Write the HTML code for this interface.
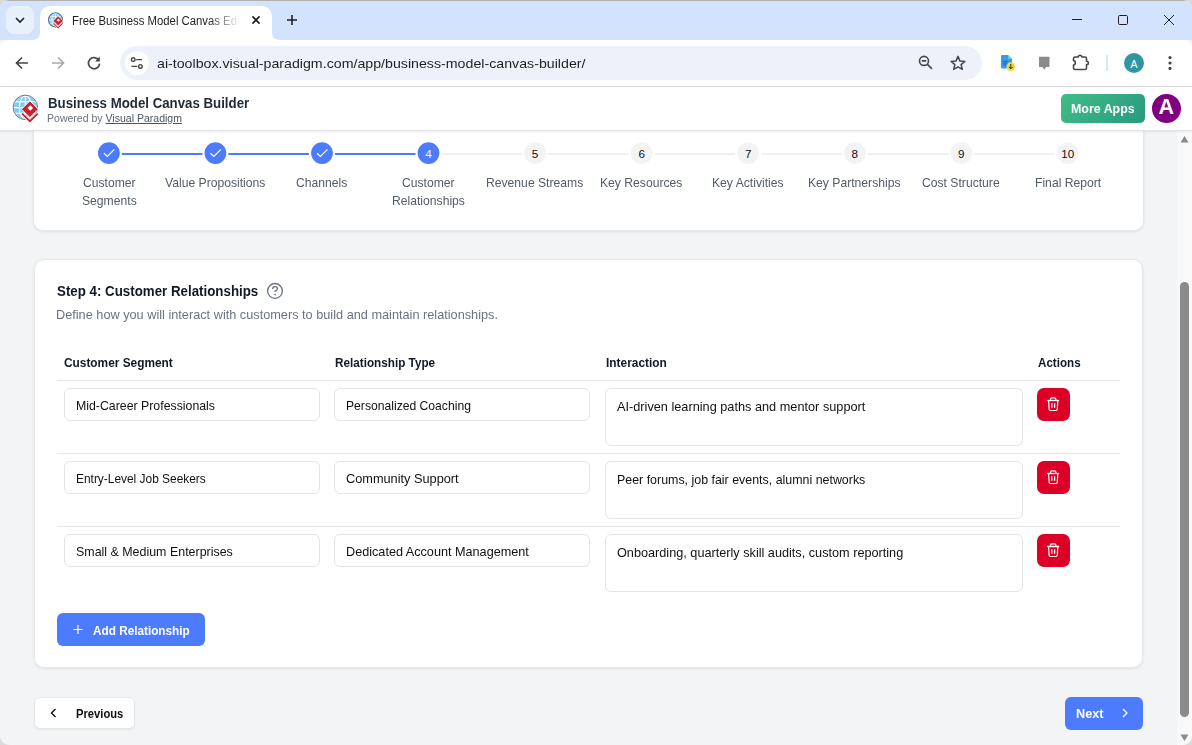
<!DOCTYPE html>
<html><head><meta charset="utf-8">
<style>
html,body{margin:0;padding:0;}
body{width:1192px;height:745px;overflow:hidden;position:relative;background:#dadada;font-family:"Liberation Sans",sans-serif;}
#win{position:absolute;left:0;top:0;width:1192px;height:745px;overflow:hidden;border-radius:9px;background:#f3f4f6;}
.t{position:absolute;white-space:nowrap;line-height:1;}
svg{position:absolute;overflow:visible;}
</style></head><body><div id="win">
<div style="position:absolute;left:0px;top:0px;width:1192px;height:40px;background:#d3e3fd;"></div>
<div style="position:absolute;left:0px;top:0px;width:1192px;height:1px;background:#b3b1ae;"></div>
<div style="position:absolute;left:6px;top:6px;width:28px;height:28px;background:#e9f0fd;border-radius:8px;"></div>
<svg style="left:0;top:0" width="1" height="1"><path d="M16 18 L20 22 L24 18" fill="none" stroke="#1f1f1f" stroke-width="1.6"/></svg>
<div style="position:absolute;left:40px;top:6px;width:232px;height:40px;background:#fff;border-radius:10px 10px 0 0;"></div>
<svg style="left:0;top:0" width="1" height="1"><path d="M32 40 Q40 40 40 32 L40 40 Z" fill="#fff"/><path d="M280 40 Q272 40 272 32 L272 40 Z" fill="#fff"/></svg>
<svg style="left:0;top:0" width="1" height="1"><g transform="translate(55.5 19.8) scale(0.58)">
<circle r="12.2" fill="#fff"/>
<circle r="11.4" fill="#86ccf2"/>
<path d="M-12 -5.8 H12 M-12 0.2 H12 M-12 6 H12 M0 -12 V12" stroke="#fff" stroke-width="1.2"/>
<ellipse rx="6" ry="11.5" fill="none" stroke="#fff" stroke-width="1.2"/>
<circle r="12.2" fill="none" stroke="#58778a" stroke-width="1.8965517241379313"/>
<path d="M-3.3 6.2 L4.5 13.8 L12.3 6.2" fill="none" stroke="#fff" stroke-width="3.4"/>
<path d="M-3.3 6.2 L4.5 13.8 L12.3 6.2" fill="none" stroke="#c9202c" stroke-width="1.8"/>
<polygon points="-4,1.8 4.5,-6.5 13,1.8 4.5,10.1" fill="#c9202c" stroke="#fff" stroke-width="1"/>
<polygon points="2.1,0.6 4.9,-2.2 7.7,0.6 4.9,3.4" fill="#fff"/>
</g></svg>
<div class="t" style="left:71.60px;top:15.49px;font-size:12.3px;color:#1f1f1f;transform:scaleX(0.9213);transform-origin:0 0;width:190px;overflow:hidden;-webkit-mask-image:linear-gradient(to right,#000 78%,transparent 96%);">Free Business Model Canvas Edi</div>
<svg style="left:0;top:0" width="1" height="1"><path d="M252.4 16.4 L259.6 23.6 M259.6 16.4 L252.4 23.6" stroke="#1f1f1f" stroke-width="1.6"/></svg>
<svg style="left:0;top:0" width="1" height="1"><path d="M287 20 H297 M292 15 V25" stroke="#1f1f1f" stroke-width="1.6"/></svg>
<svg style="left:0;top:0" width="1" height="1">
<path d="M1072 19.5 H1082" stroke="#1f1f1f" stroke-width="1"/>
<rect x="1118.5" y="15.5" width="9" height="9" rx="1.2" fill="none" stroke="#1f1f1f" stroke-width="1"/>
<path d="M1164 15 L1174 25 M1174 15 L1164 25" stroke="#1f1f1f" stroke-width="1"/>
</svg>
<div style="position:absolute;left:0px;top:40px;width:1192px;height:46px;background:#fff;border-radius:8px 8px 0 0;"></div>
<div style="position:absolute;left:0px;top:86px;width:1192px;height:1px;background:#d9d9d9;"></div>
<svg style="left:0;top:0" width="1" height="1">
<path d="M28 63 H16.5 M22 57.5 L16.5 63 L22 68.5" fill="none" stroke="#474747" stroke-width="1.7"/>
<path d="M52 63 H63.5 M58 57.5 L63.5 63 L58 68.5" fill="none" stroke="#a9a9a9" stroke-width="1.7"/>
<path d="M98.8 60.2 A5.6 5.6 0 1 0 99.6 63.6" fill="none" stroke="#474747" stroke-width="1.7"/>
<path d="M99.8 56.6 V61.4 H95 Z" fill="#474747"/>
</svg>
<div style="position:absolute;left:120px;top:46px;width:862px;height:34px;background:#edf2fa;border-radius:17px;"></div>
<div style="position:absolute;left:124.5px;top:51px;width:24px;height:24px;background:#fff;border-radius:50%;"></div>
<svg style="left:0;top:0" width="1" height="1">
<circle cx="133.2" cy="59.6" r="1.8" fill="none" stroke="#474747" stroke-width="1.4"/>
<path d="M136.2 59.6 H142 M131.4 66.4 H137.2" stroke="#474747" stroke-width="1.4"/>
<circle cx="140.4" cy="66.4" r="1.8" fill="none" stroke="#474747" stroke-width="1.4"/>
</svg>
<div class="t" style="left:156.80px;top:57.19px;font-size:13.6px;color:#1f1f1f;transform:scaleX(1.0443);transform-origin:0 0;">ai-toolbox.visual-paradigm.com/app/business-model-canvas-builder/</div>
<svg style="left:0;top:0" width="1" height="1">
<circle cx="924" cy="60.9" r="4.5" fill="none" stroke="#474747" stroke-width="1.6"/>
<path d="M921.8 60.9 H926.2 M927.2 64.1 L932 68.9" stroke="#474747" stroke-width="1.6"/>
<path d="M958.00 56.38 L960.02 61.08 L964.90 61.44 L961.13 64.57 L962.32 69.36 L958.00 66.78 L953.68 69.36 L954.87 64.57 L951.10 61.44 L955.98 61.08 Z" fill="none" stroke="#474747" stroke-width="1.5" stroke-linejoin="round"/>
</svg>
<svg style="left:0;top:0" width="1" height="1">
<path d="M1002 55 H1008 L1012 59 V67.5 Q1012 68.5 1011 68.5 H1002 Q1001 68.5 1001 67.5 V56 Q1001 55 1002 55 Z" fill="#3b9ae6"/>
<path d="M1008 55 L1012 59 H1008 Z" fill="#5fd3c6"/>
<path d="M1003 61.4 H1007.5 M1003 63.2 H1007.5 M1003 65 H1006.5" stroke="#1f5fa8" stroke-width="0.9"/>
<circle cx="1010.8" cy="66.6" r="4.3" fill="#f4d63a"/>
<path d="M1010.8 64 V68.6 M1008.9 66.9 L1010.8 68.8 L1012.7 66.9" fill="none" stroke="#2a2a2a" stroke-width="1"/>
<path d="M1039 56.8 H1049.5 V67 H1046 L1044.2 69.7 L1042.4 67 H1039 Z" fill="#8a8a8a"/>
<path d="M1075 57 H1078.3 Q1078.3 55.2 1080 55.2 Q1081.7 55.2 1081.7 57 H1085 Q1086.5 57 1086.5 58.5 V61.2 Q1088.4 61.2 1088.4 62.9 Q1088.4 64.6 1086.5 64.6 V68 Q1086.5 69.5 1085 69.5 H1075 Q1073.5 69.5 1073.5 68 V65 Q1075.3 65 1075.3 62.8 Q1075.3 60.6 1073.5 60.6 V58.5 Q1073.5 57 1075 57 Z" fill="none" stroke="#474747" stroke-width="1.6" stroke-linejoin="round"/>
<path d="M1107 55 V71" stroke="#cbdcfa" stroke-width="1.5"/>
<circle cx="1134" cy="63" r="10" fill="#3096a4"/>
<circle cx="1170" cy="57.6" r="1.6" fill="#474747"/><circle cx="1170" cy="63" r="1.6" fill="#474747"/><circle cx="1170" cy="68.4" r="1.6" fill="#474747"/>
</svg>
<div class="t" style="left:1130.48px;top:58.91px;font-size:10.5px;color:#fff;">A</div>
<div style="position:absolute;left:0px;top:87px;width:1192px;height:43px;background:#fff;border-bottom:1px solid #e1e3e7;box-shadow:0 1px 2px rgba(0,0,0,0.07);z-index:5;"></div>
<div style="position:absolute;left:0;top:0;z-index:7;"><svg style="left:0;top:0" width="1" height="1"><g transform="translate(25.4 107.4) scale(1)">
<circle r="12.2" fill="#fff"/>
<circle r="11.4" fill="#86ccf2"/>
<path d="M-12 -5.8 H12 M-12 0.2 H12 M-12 6 H12 M0 -12 V12" stroke="#fff" stroke-width="1.2"/>
<ellipse rx="6" ry="11.5" fill="none" stroke="#fff" stroke-width="1.2"/>
<circle r="12.2" fill="none" stroke="#58778a" stroke-width="1"/>
<path d="M-3.3 6.2 L4.5 13.8 L12.3 6.2" fill="none" stroke="#fff" stroke-width="3.4"/>
<path d="M-3.3 6.2 L4.5 13.8 L12.3 6.2" fill="none" stroke="#c9202c" stroke-width="1.8"/>
<polygon points="-4,1.8 4.5,-6.5 13,1.8 4.5,10.1" fill="#c9202c" stroke="#fff" stroke-width="1"/>
<polygon points="2.1,0.6 4.9,-2.2 7.7,0.6 4.9,3.4" fill="#fff"/>
</g></svg>
<div class="t" style="left:47.80px;top:96.92px;font-size:13.8px;color:#1f2937;font-weight:700;transform:scaleX(0.9611);transform-origin:0 0;">Business Model Canvas Builder</div>
<div class="t" style="left:47.00px;top:113.58px;font-size:10.3px;color:#6b7280;transform:scaleX(1.0224);transform-origin:0 0;">Powered by <span style="text-decoration:underline;color:#4b5563">Visual Paradigm</span></div>
<div style="position:absolute;left:1061px;top:94px;width:84px;height:29px;background:linear-gradient(135deg,#3fbd86,#2a9a80);border-radius:5px;"></div>
<div class="t" style="left:1071.20px;top:103.48px;font-size:12.9px;color:#fff;font-weight:700;transform:scaleX(0.9626);transform-origin:0 0;">More Apps</div>
<div style="position:absolute;left:1152px;top:94px;width:29px;height:29px;background:#800080;border-radius:50%;"></div>
<div class="t" style="left:1158.56px;top:97.40px;font-size:21.5px;color:#fff;font-weight:700;">A</div>
</div>
<div style="position:absolute;left:33px;top:100px;width:1111px;height:131px;background:#fff;border:1px solid #e5e7eb;border-radius:10px;box-shadow:0 1px 3px rgba(0,0,0,0.08);box-sizing:border-box;"></div>
<svg style="left:0;top:0" width="1" height="1"><rect x="121.9" y="153" width="80.5" height="2" fill="#4c7bfb"/><rect x="228.4" y="153" width="80.6" height="2" fill="#4c7bfb"/><rect x="335.0" y="153" width="80.5" height="2" fill="#4c7bfb"/><rect x="441.5" y="153" width="80.6" height="2" fill="#efefef"/><rect x="548.1" y="153" width="80.5" height="2" fill="#efefef"/><rect x="654.6" y="153" width="80.5" height="2" fill="#efefef"/><rect x="761.2" y="153" width="80.6" height="2" fill="#efefef"/><rect x="867.8" y="153" width="80.5" height="2" fill="#efefef"/><rect x="974.3" y="153" width="80.5" height="2" fill="#efefef"/><circle cx="108.9" cy="153.1" r="10.9" fill="#4c7bfb"/><path d="M103.9 153.3 L107.3 156.4 L114.4 149.3" fill="none" stroke="#fff" stroke-width="1.2"/><circle cx="215.4" cy="153.1" r="10.9" fill="#4c7bfb"/><path d="M210.4 153.3 L213.8 156.4 L220.9 149.3" fill="none" stroke="#fff" stroke-width="1.2"/><circle cx="322.0" cy="153.1" r="10.9" fill="#4c7bfb"/><path d="M317.0 153.3 L320.4 156.4 L327.5 149.3" fill="none" stroke="#fff" stroke-width="1.2"/><circle cx="428.5" cy="153.1" r="10.9" fill="#4c7bfb"/><circle cx="535.1" cy="153.1" r="10.9" fill="#f3f3f3"/><circle cx="641.6" cy="153.1" r="10.9" fill="#f3f3f3"/><circle cx="748.2" cy="153.1" r="10.9" fill="#f3f3f3"/><circle cx="854.8" cy="153.1" r="10.9" fill="#f3f3f3"/><circle cx="961.3" cy="153.1" r="10.9" fill="#f3f3f3"/><circle cx="1067.8" cy="153.1" r="10.9" fill="#f3f3f3"/></svg>
<div class="t" style="left:82.55px;top:177.13px;font-size:12.6px;color:#535b69;transform:scaleX(0.9648);transform-origin:0 0;">Customer</div>
<div class="t" style="left:81.52px;top:195.03px;font-size:12.6px;color:#535b69;transform:scaleX(0.9648);transform-origin:0 0;">Segments</div>
<div class="t" style="left:165.21px;top:177.13px;font-size:12.6px;color:#535b69;transform:scaleX(0.9648);transform-origin:0 0;">Value Propositions</div>
<div class="t" style="left:296.32px;top:177.13px;font-size:12.6px;color:#535b69;transform:scaleX(0.9648);transform-origin:0 0;">Channels</div>
<div class="t" style="left:425.30px;top:147.80px;font-size:11.7px;color:#fff;">4</div>
<div class="t" style="left:402.20px;top:177.13px;font-size:12.6px;color:#535b69;transform:scaleX(0.9648);transform-origin:0 0;">Customer</div>
<div class="t" style="left:392.05px;top:195.03px;font-size:12.6px;color:#535b69;transform:scaleX(0.9648);transform-origin:0 0;">Relationships</div>
<div class="t" style="left:531.85px;top:147.80px;font-size:11.7px;color:#111;">5</div>
<div class="t" style="left:486.44px;top:177.13px;font-size:12.6px;color:#535b69;transform:scaleX(0.9648);transform-origin:0 0;">Revenue Streams</div>
<div class="t" style="left:638.40px;top:147.80px;font-size:11.7px;color:#111;">6</div>
<div class="t" style="left:600.44px;top:177.13px;font-size:12.6px;color:#535b69;transform:scaleX(0.9648);transform-origin:0 0;">Key Resources</div>
<div class="t" style="left:744.95px;top:147.80px;font-size:11.7px;color:#111;">7</div>
<div class="t" style="left:712.40px;top:177.13px;font-size:12.6px;color:#535b69;transform:scaleX(0.9648);transform-origin:0 0;">Key Activities</div>
<div class="t" style="left:851.50px;top:147.80px;font-size:11.7px;color:#111;">8</div>
<div class="t" style="left:808.46px;top:177.13px;font-size:12.6px;color:#535b69;transform:scaleX(0.9648);transform-origin:0 0;">Key Partnerships</div>
<div class="t" style="left:958.05px;top:147.80px;font-size:11.7px;color:#111;">9</div>
<div class="t" style="left:922.46px;top:177.13px;font-size:12.6px;color:#535b69;transform:scaleX(0.9648);transform-origin:0 0;">Cost Structure</div>
<div class="t" style="left:1061.36px;top:147.80px;font-size:11.7px;color:#111;">10</div>
<div class="t" style="left:1034.75px;top:177.13px;font-size:12.6px;color:#535b69;transform:scaleX(0.9648);transform-origin:0 0;">Final Report</div>
<div style="position:absolute;left:34px;top:259px;width:1109px;height:409px;background:#fff;border:1px solid #e5e7eb;border-radius:10px;box-shadow:0 1px 3px rgba(0,0,0,0.08);box-sizing:border-box;"></div>
<div class="t" style="left:57.20px;top:284.27px;font-size:14.8px;color:#111827;font-weight:700;transform:scaleX(0.8999);transform-origin:0 0;">Step 4: Customer Relationships</div>
<svg style="left:0;top:0" width="1" height="1">
<circle cx="275" cy="290.9" r="7.4" fill="none" stroke="#6b7280" stroke-width="1.3"/>
<path d="M272.6 288.9 Q272.6 286.6 275 286.6 Q277.4 286.6 277.4 288.7 Q277.4 290.2 275 291.1 V292.1" fill="none" stroke="#6b7280" stroke-width="1.3"/>
<circle cx="275" cy="294.6" r="0.85" fill="#6b7280"/>
</svg>
<div class="t" style="left:56.20px;top:308.66px;font-size:12.8px;color:#6b7280;transform:scaleX(0.9942);transform-origin:0 0;">Define how you will interact with customers to build and maintain relationships.</div>
<div class="t" style="left:64.40px;top:357.08px;font-size:12.9px;color:#111827;font-weight:700;transform:scaleX(0.9206);transform-origin:0 0;">Customer Segment</div>
<div class="t" style="left:334.80px;top:357.08px;font-size:12.9px;color:#111827;font-weight:700;transform:scaleX(0.9095);transform-origin:0 0;">Relationship Type</div>
<div class="t" style="left:605.80px;top:357.08px;font-size:12.9px;color:#111827;font-weight:700;transform:scaleX(0.9223);transform-origin:0 0;">Interaction</div>
<div class="t" style="left:1037.50px;top:357.08px;font-size:12.9px;color:#111827;font-weight:700;transform:scaleX(0.9010);transform-origin:0 0;">Actions</div>
<div style="position:absolute;left:57px;top:380px;width:1063px;height:1px;background:#e5e7eb;"></div>
<div style="position:absolute;left:64px;top:388px;width:256px;height:33px;border:1px solid #e2e4e8;border-radius:6px;box-sizing:border-box;background:#fff;"></div>
<div style="position:absolute;left:334px;top:388px;width:256px;height:33px;border:1px solid #e2e4e8;border-radius:6px;box-sizing:border-box;background:#fff;"></div>
<div style="position:absolute;left:605px;top:388px;width:418px;height:58px;border:1px solid #e2e4e8;border-radius:6px;box-sizing:border-box;background:#fff;"></div>
<div class="t" style="left:75.90px;top:399.90px;font-size:12.4px;color:#111;transform:scaleX(0.9945);transform-origin:0 0;">Mid-Career Professionals</div>
<div class="t" style="left:345.90px;top:399.90px;font-size:12.4px;color:#111;transform:scaleX(0.9801);transform-origin:0 0;">Personalized Coaching</div>
<div class="t" style="left:616.90px;top:400.68px;font-size:12.9px;color:#111;transform:scaleX(0.9874);transform-origin:0 0;">AI-driven learning paths and mentor support</div>
<div style="position:absolute;left:1037px;top:388px;width:33px;height:33px;background:#dc0026;border-radius:7px;"></div>
<svg style="left:0;top:0" width="1" height="1">
<path d="M1047.2 400.5 H1059.2" stroke="#fff" stroke-width="1.3"/>
<path d="M1050.5 400.5 V399.3 Q1050.5 397.9 1051.9 397.9 H1054.5 Q1055.9 397.9 1055.9 399.3 V400.5" fill="none" stroke="#fff" stroke-width="1.2"/>
<path d="M1048.6000000000001 400.5 L1049.1000000000001 409.3 Q1049.2 410.5 1050.4 410.5 H1056.0 Q1057.2 410.5 1057.3 409.3 L1057.8 400.5" fill="none" stroke="#fff" stroke-width="1.2"/>
<path d="M1051.8 403.2 V407.8 M1054.6000000000001 403.2 V407.8" stroke="#fff" stroke-width="1.3"/>
</svg>
<div style="position:absolute;left:57px;top:453px;width:1063px;height:1px;background:#e5e7eb;"></div>
<div style="position:absolute;left:64px;top:461px;width:256px;height:33px;border:1px solid #e2e4e8;border-radius:6px;box-sizing:border-box;background:#fff;"></div>
<div style="position:absolute;left:334px;top:461px;width:256px;height:33px;border:1px solid #e2e4e8;border-radius:6px;box-sizing:border-box;background:#fff;"></div>
<div style="position:absolute;left:605px;top:461px;width:418px;height:58px;border:1px solid #e2e4e8;border-radius:6px;box-sizing:border-box;background:#fff;"></div>
<div class="t" style="left:75.90px;top:472.90px;font-size:12.4px;color:#111;transform:scaleX(0.9615);transform-origin:0 0;">Entry-Level Job Seekers</div>
<div class="t" style="left:345.90px;top:472.90px;font-size:12.4px;color:#111;transform:scaleX(1.0287);transform-origin:0 0;">Community Support</div>
<div class="t" style="left:616.90px;top:473.68px;font-size:12.9px;color:#111;transform:scaleX(0.9627);transform-origin:0 0;">Peer forums, job fair events, alumni networks</div>
<div style="position:absolute;left:1037px;top:461px;width:33px;height:33px;background:#dc0026;border-radius:7px;"></div>
<svg style="left:0;top:0" width="1" height="1">
<path d="M1047.2 473.5 H1059.2" stroke="#fff" stroke-width="1.3"/>
<path d="M1050.5 473.5 V472.3 Q1050.5 470.9 1051.9 470.9 H1054.5 Q1055.9 470.9 1055.9 472.3 V473.5" fill="none" stroke="#fff" stroke-width="1.2"/>
<path d="M1048.6000000000001 473.5 L1049.1000000000001 482.3 Q1049.2 483.5 1050.4 483.5 H1056.0 Q1057.2 483.5 1057.3 482.3 L1057.8 473.5" fill="none" stroke="#fff" stroke-width="1.2"/>
<path d="M1051.8 476.2 V480.8 M1054.6000000000001 476.2 V480.8" stroke="#fff" stroke-width="1.3"/>
</svg>
<div style="position:absolute;left:57px;top:526px;width:1063px;height:1px;background:#e5e7eb;"></div>
<div style="position:absolute;left:64px;top:534px;width:256px;height:33px;border:1px solid #e2e4e8;border-radius:6px;box-sizing:border-box;background:#fff;"></div>
<div style="position:absolute;left:334px;top:534px;width:256px;height:33px;border:1px solid #e2e4e8;border-radius:6px;box-sizing:border-box;background:#fff;"></div>
<div style="position:absolute;left:605px;top:534px;width:418px;height:58px;border:1px solid #e2e4e8;border-radius:6px;box-sizing:border-box;background:#fff;"></div>
<div class="t" style="left:75.90px;top:545.90px;font-size:12.4px;color:#111;transform:scaleX(1.0030);transform-origin:0 0;">Small &amp; Medium Enterprises</div>
<div class="t" style="left:345.90px;top:545.90px;font-size:12.4px;color:#111;transform:scaleX(1.0210);transform-origin:0 0;">Dedicated Account Management</div>
<div class="t" style="left:616.90px;top:546.68px;font-size:12.9px;color:#111;transform:scaleX(0.9839);transform-origin:0 0;">Onboarding, quarterly skill audits, custom reporting</div>
<div style="position:absolute;left:1037px;top:534px;width:33px;height:33px;background:#dc0026;border-radius:7px;"></div>
<svg style="left:0;top:0" width="1" height="1">
<path d="M1047.2 546.5 H1059.2" stroke="#fff" stroke-width="1.3"/>
<path d="M1050.5 546.5 V545.3 Q1050.5 543.9 1051.9 543.9 H1054.5 Q1055.9 543.9 1055.9 545.3 V546.5" fill="none" stroke="#fff" stroke-width="1.2"/>
<path d="M1048.6000000000001 546.5 L1049.1000000000001 555.3 Q1049.2 556.5 1050.4 556.5 H1056.0 Q1057.2 556.5 1057.3 555.3 L1057.8 546.5" fill="none" stroke="#fff" stroke-width="1.2"/>
<path d="M1051.8 549.2 V553.8 M1054.6000000000001 549.2 V553.8" stroke="#fff" stroke-width="1.3"/>
</svg>
<div style="position:absolute;left:57px;top:613px;width:148px;height:33px;background:#4c7bfb;border-radius:6px;"></div>
<svg style="left:0;top:0" width="1" height="1"><path d="M73.5 629.5 H82.5 M78 625 V634" stroke="#fff" stroke-width="1.2"/></svg>
<div class="t" style="left:93.20px;top:623.73px;font-size:13.2px;color:#fff;font-weight:700;transform:scaleX(0.8921);transform-origin:0 0;">Add Relationship</div>
<div style="position:absolute;left:34px;top:697px;width:101px;height:32px;background:#fff;border:1px solid #e5e7eb;border-radius:6px;box-sizing:border-box;box-shadow:0 1px 2px rgba(0,0,0,0.06);"></div>
<svg style="left:0;top:0" width="1" height="1"><path d="M55.5 709 L51.5 713 L55.5 717" fill="none" stroke="#111" stroke-width="1.4"/></svg>
<div class="t" style="left:75.80px;top:707.86px;font-size:12.8px;color:#111;font-weight:700;transform:scaleX(0.8746);transform-origin:0 0;">Previous</div>
<div style="position:absolute;left:1065px;top:697px;width:78px;height:33px;background:#4c7bfb;border-radius:6px;"></div>
<div class="t" style="left:1075.80px;top:707.96px;font-size:12.8px;color:#fff;font-weight:700;transform:scaleX(0.9937);transform-origin:0 0;">Next</div>
<svg style="left:0;top:0" width="1" height="1"><path d="M1123 709 L1127 713 L1123 717" fill="none" stroke="#fff" stroke-width="1.3"/></svg>
<div style="position:absolute;left:1177px;top:130px;width:15px;height:615px;background:#f9f9f9;"></div>
<div style="position:absolute;left:1180px;top:282px;width:9px;height:435px;background:#8b8b8b;border-radius:5px;"></div>
<svg style="left:0;top:0" width="1" height="1"><path d="M1180.5 142.5 L1184.5 136 L1188.5 142.5 Z" fill="#8b8b8b"/><path d="M1180.5 734.5 L1184.5 741 L1188.5 734.5 Z" fill="#8b8b8b"/></svg>
</div></body></html>
